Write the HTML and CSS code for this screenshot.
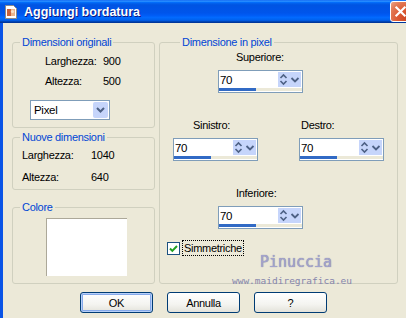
FILE: index.html
```html
<!DOCTYPE html>
<html lang="it">
<head>
<meta charset="UTF-8">
<title>Aggiungi bordatura</title>
<link rel="stylesheet" href="styles.css">
</head>
<body>

<div class="window">
  <div class="titlebar">
    <svg class="app-icon" viewBox="0 0 16 16">
      <path d="M2.5 1.5h8l3 3v10h-11z" fill="#fff" stroke="#8a8a8a"/>
      <rect x="4" y="5" width="8" height="7" fill="#e9b48c"/>
      <rect x="4" y="5" width="4" height="7" fill="#c9623a"/>
      <circle cx="9.5" cy="7.5" r="1.6" fill="#f6e2c8"/>
    </svg>
    <span class="title">Aggiungi bordatura</span>
    <button class="close">
      <svg viewBox="0 0 21 21"><path d="M6 6l9 9M15 6l-9 9" stroke="#fff" stroke-width="2.4" stroke-linecap="square"/></svg>
    </button>
  </div>

  <div class="client">
    <div class="panes">
      <div class="left">
        <fieldset class="group original">
          <legend>Dimensioni originali</legend>
          <div class="rows">
            <div class="row"><span class="lbl">Larghezza:</span><span>900</span></div>
            <div class="row"><span class="lbl">Altezza:</span><span>500</span></div>
          </div>
          <div class="select">
            <span class="select-text">Pixel</span>
            <span class="select-btn">
              <svg viewBox="0 0 15 16"><path d="M4 6l3.5 3.5L11 6" fill="none" stroke="#4d6185" stroke-width="2"/></svg>
            </span>
          </div>
        </fieldset>

        <fieldset class="group new">
          <legend>Nuove dimensioni</legend>
          <div class="row"><span class="lbl">Larghezza:</span><span>1040</span></div>
          <div class="row"><span class="lbl">Altezza:</span><span>640</span></div>
        </fieldset>

        <fieldset class="group color">
          <legend>Colore</legend>
          <div class="swatch"></div>
        </fieldset>
      </div>

      <fieldset class="group pixels">
        <legend>Dimensione in pixel</legend>

        <div class="field field-top">
          <span class="field-label">Superiore:</span>
          <div class="spin">
            <div class="spin-top">
              <span class="val">70</span>
              <svg class="arrows" viewBox="0 0 11 15"><rect x="0" y="0" width="11" height="15" fill="#c6d5fb"/><path d="M2.5 6l3-3 3 3M2.5 9l3 3 3-3" fill="none" stroke="#4d6185" stroke-width="1.6"/></svg>
              <svg class="drop" viewBox="0 0 12 15"><rect x="0" y="0" width="12" height="15" fill="#c6d5fb"/><path d="M2.5 6l3.5 3.5L9.5 6" fill="none" stroke="#4d6185" stroke-width="1.8"/></svg>
            </div>
            <div class="bar"><div class="fill"></div></div>
          </div>
        </div>

        <div class="sides">
          <div class="field field-left">
            <span class="field-label">Sinistro:</span>
            <div class="spin">
              <div class="spin-top">
                <span class="val">70</span>
                <svg class="arrows" viewBox="0 0 11 15"><rect x="0" y="0" width="11" height="15" fill="#c6d5fb"/><path d="M2.5 6l3-3 3 3M2.5 9l3 3 3-3" fill="none" stroke="#4d6185" stroke-width="1.6"/></svg>
                <svg class="drop" viewBox="0 0 12 15"><rect x="0" y="0" width="12" height="15" fill="#c6d5fb"/><path d="M2.5 6l3.5 3.5L9.5 6" fill="none" stroke="#4d6185" stroke-width="1.8"/></svg>
              </div>
              <div class="bar"><div class="fill"></div></div>
            </div>
          </div>
          <div class="field field-right">
            <span class="field-label">Destro:</span>
            <div class="spin">
              <div class="spin-top">
                <span class="val">70</span>
                <svg class="arrows" viewBox="0 0 11 15"><rect x="0" y="0" width="11" height="15" fill="#c6d5fb"/><path d="M2.5 6l3-3 3 3M2.5 9l3 3 3-3" fill="none" stroke="#4d6185" stroke-width="1.6"/></svg>
                <svg class="drop" viewBox="0 0 12 15"><rect x="0" y="0" width="12" height="15" fill="#c6d5fb"/><path d="M2.5 6l3.5 3.5L9.5 6" fill="none" stroke="#4d6185" stroke-width="1.8"/></svg>
              </div>
              <div class="bar"><div class="fill"></div></div>
            </div>
          </div>
        </div>

        <div class="field field-bottom">
          <span class="field-label">Inferiore:</span>
          <div class="spin">
            <div class="spin-top">
              <span class="val">70</span>
              <svg class="arrows" viewBox="0 0 11 15"><rect x="0" y="0" width="11" height="15" fill="#c6d5fb"/><path d="M2.5 6l3-3 3 3M2.5 9l3 3 3-3" fill="none" stroke="#4d6185" stroke-width="1.6"/></svg>
              <svg class="drop" viewBox="0 0 12 15"><rect x="0" y="0" width="12" height="15" fill="#c6d5fb"/><path d="M2.5 6l3.5 3.5L9.5 6" fill="none" stroke="#4d6185" stroke-width="1.8"/></svg>
            </div>
            <div class="bar"><div class="fill"></div></div>
          </div>
        </div>

        <div class="check-row">
          <span class="checkbox">
            <svg viewBox="0 0 11 11"><path d="M2 5.5l2.3 2.4L9 3" fill="none" stroke="#21a121" stroke-width="2"/></svg>
          </span>
          <span class="check-label">Simmetriche</span>
        </div>

        <div class="watermark">
          <span class="wm-name">Pinuccia</span>
          <span class="wm-site">www.maidiregrafica.eu</span>
        </div>
      </fieldset>
    </div>

    <div class="buttons">
      <button class="btn default">OK</button>
      <button class="btn">Annulla</button>
      <button class="btn">?</button>
    </div>
  </div>
</div>

</body>
</html>
```

FILE: styles.css
```css
* {
box-sizing: border-box;
}

body {
margin: 0;
background: #ece9d8;
font-family: "Liberation Sans", Arial, sans-serif;
font-size: 11px;
letter-spacing: -0.3px;
color: #000;
}

.window {
width: 406px;
height: 318px;
overflow: hidden;
display: flex;
flex-direction: column;
}

/* title bar */
.titlebar {
height: 23px;
flex: none;
display: flex;
align-items: center;
padding-left: 3px;
background: linear-gradient(to bottom, #0058ee 0%, #3593ff 4%, #288eff 6%, #127dff 8%, #036ffc 10%, #0262ee 14%, #0057e5 20%, #0054e3 24%, #0055eb 56%, #005bf5 66%, #026afe 76%, #0062ef 86%, #0052d6 92%, #0040ab 94%, #003092 100%);
}

.app-icon {
width: 16px;
height: 16px;
margin-right: 5px;
}

.title {
flex: 1;
color: #fff;
font-weight: bold;
font-size: 12.5px;
letter-spacing: 0;
text-shadow: 1px 1px #0a1883;
}

.close {
width: 21px;
height: 21px;
margin-right: -5px;
padding: 0;
border: 1px solid #fff;
border-radius: 3px;
background: radial-gradient(circle at 80% 85%, #cc4622 0%, #dd5a33 40%, #e27c58 75%, #eaa489 100%);
}

.close svg {
display: block;
width: 19px;
height: 19px;
}

/* client area */
.client {
flex: 1;
border-left: 3px solid #0a54e6;
padding: 12px 0 0 9px;
}

.panes {
display: grid;
grid-template-columns: 143px 239px;
column-gap: 4px;
}

.left {
display: flex;
flex-direction: column;
}

.group {
margin: 0;
padding: 0;
min-width: 0;
border: 1px solid #d0d0bf;
border-radius: 3px;
}

.group legend {
margin-left: 7px;
padding: 0 2px;
line-height: 14px;
color: #0046d5;
}

.original {
height: 93px;
}

.new {
height: 60px;
margin-top: 2px;
}

.color {
height: 84px;
margin-top: 10px;
}

.pixels {
height: 249px;
padding-left: 13px;
position: relative;
}

.rows {
padding-top: 2px;
}

.row {
display: flex;
height: 20px;
line-height: 20px;
padding-left: 32px;
}

.row .lbl {
width: 58px;
}

.new .row {
height: 22px;
line-height: 22px;
padding-left: 9px;
}

.new .row .lbl {
width: 69px;
}

.select {
display: flex;
align-items: center;
width: 80px;
height: 20px;
margin: 9px 0 0 17px;
border: 1px solid #7f9db9;
background: #fff;
}

.select-text {
flex: 1;
padding-left: 3px;
font-size: 11.5px;
}

.select-btn {
width: 15px;
height: 16px;
margin-right: 1px;
border-radius: 2px;
background: #c6d5fb;
}

.select-btn svg {
display: block;
width: 15px;
height: 16px;
}

.swatch {
width: 81px;
height: 58px;
margin: 4px 0 0 33px;
background: #fff;
border-top: 1px solid #aca899;
border-left: 1px solid #aca899;
}

/* spin fields */
.field {
display: flex;
flex-direction: column;
gap: 6px;
}

.field-label {
line-height: 14px;
}

.field-top,
.field-bottom {
margin-left: 45px;
}

.field-top {
margin-top: 1px;
}

.field-top .field-label,
.field-bottom .field-label {
padding-left: 18px;
}

.field-left .field-label {
padding-left: 20px;
}

.field-right .field-label {
padding-left: 2px;
}

.sides {
display: flex;
gap: 41px;
margin-top: 25px;
}

.field-bottom {
margin-top: 25px;
}

.spin {
width: 85px;
height: 23px;
border: 1px solid #7f9db9;
background: #fff;
display: flex;
flex-direction: column;
}

.spin-top {
height: 17px;
display: flex;
align-items: center;
padding-left: 1px;
}

.val {
flex: 1;
font-size: 11.5px;
}

.arrows {
width: 11px;
height: 15px;
}

.drop {
width: 12px;
height: 15px;
margin-right: 1px;
}

.bar {
height: 3px;
margin-top: auto;
margin-bottom: 1px;
background: #ece9d8;
}

.fill {
width: 37px;
height: 100%;
background: #316ac5;
}

.check-row {
display: flex;
align-items: center;
margin: 11px 0 0 -6px;
}

.checkbox {
width: 13px;
height: 13px;
border: 1px solid #1c5180;
background: #fff;
margin-right: 2px;
}

.checkbox svg {
display: block;
width: 11px;
height: 11px;
}

.check-label {
border: 1px dotted #000;
padding: 0 1px;
line-height: 14px;
}

.watermark {
position: absolute;
left: 68px;
top: 205px;
width: 128px;
display: flex;
flex-direction: column;
align-items: center;
font-family: "DejaVu Sans Mono", monospace;
letter-spacing: 0;
}

.wm-name {
font-size: 15px;
line-height: 17px;
color: #a3a3cc;
text-shadow: 0 0 1px #6f6f9a;
padding-left: 8px;
}

.wm-site {
font-size: 9.5px;
line-height: 11px;
margin-top: 4px;
color: #8585ac;
}

/* bottom buttons */
.buttons {
display: flex;
gap: 14px;
padding-left: 68px;
margin-top: 8px;
}

.btn {
width: 73px;
height: 21px;
padding: 0;
font-family: "Liberation Sans", Arial, sans-serif;
font-size: 11px;
letter-spacing: -0.3px;
color: #000;
border: 1px solid #003c74;
border-radius: 3px;
background: linear-gradient(to bottom, #ffffff 0%, #f4f4f0 60%, #e3e2da 100%);
}

.btn.default {
box-shadow: inset 0 0 0 1px #b8d0f8, inset 0 0 0 2px #85a9ea;
}
```
